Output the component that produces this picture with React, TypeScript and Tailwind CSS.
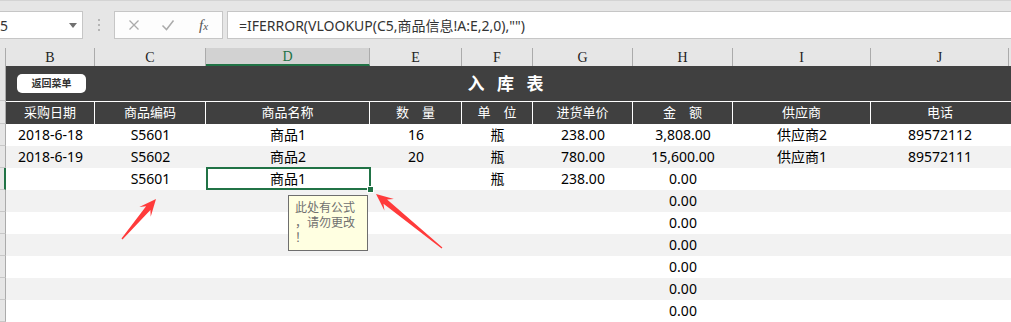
import React from 'react';

const COLS = [
  { k: 'B', w: 'w-[89px]' },
  { k: 'C', w: 'w-[111px]' },
  { k: 'D', w: 'w-[164px]' },
  { k: 'E', w: 'w-[92px]' },
  { k: 'F', w: 'w-[71px]' },
  { k: 'G', w: 'w-[100px]' },
  { k: 'H', w: 'w-[100px]' },
  { k: 'I', w: 'w-[138px]' },
  { k: 'J', w: 'w-[138px]' },
];

const HEADERS = ['采购日期', '商品编码', '商品名称', '数　量', '单　位', '进货单价', '金　额', '供应商', '电话'];

const E = ['', '', '', '', '', '', '0.00', '', ''];
const ROWS: string[][] = [
  ['2018-6-18', 'S5601', '商品1', '16', '瓶', '238.00', '3,808.00', '供应商2', '89572112'],
  ['2018-6-19', 'S5602', '商品2', '20', '瓶', '780.00', '15,600.00', '供应商1', '89572111'],
  ['', 'S5601', '商品1', '', '瓶', '238.00', '0.00', '', ''],
  E, E, E, E, E, E,
  ['', '', '', '', '', '', '', '', ''],
];

function arrow(tx: number, ty: number, hx: number, hy: number) {
  const dx = hx - tx;
  const dy = hy - ty;
  const L = Math.hypot(dx, dy);
  const ux = dx / L;
  const uy = dy / L;
  const px = -uy;
  const py = ux;
  const headLen = 17;
  const headHalf = 7.5;
  const neckBack = 12;
  const neckHalf = 2.8;
  const tailHalf = 0.6;
  const P = (along: number, side: number) => [hx - ux * along + px * side, hy - uy * along + py * side];
  const pts = [
    P(L, tailHalf),
    P(neckBack, neckHalf),
    P(headLen, headHalf),
    P(0, 0),
    P(headLen, -headHalf),
    P(neckBack, -neckHalf),
    P(L, -tailHalf),
  ];
  return pts.map((p) => p.map((n) => n.toFixed(1)).join(',')).join(' ');
}

function RowHead({ selected, h }: { selected?: boolean; h: string }) {
  return (
    <div
      className={`${h} w-[6px] shrink-0 bg-[#e6e6e6] border-b border-[#c8c8c8] ${
        selected ? 'border-r-2 border-r-[#217346]' : 'border-r border-r-[#ababab]'
      }`}
    />
  );
}

export default function App() {
  return (
    <div className="relative w-[1011px] h-[322px] overflow-hidden bg-white font-['Noto_Sans','Noto_Sans_CJK_SC',sans-serif] text-black">
      {/* Formula bar */}
      <div className="h-[48px] bg-[#e6e6e6] border-t border-[#d4d4d4] flex items-start pt-[10px]">
        <div className="w-[83px] h-[28px] shrink-0 bg-white border border-l-0 border-[#c6c6c6] flex items-center justify-between pr-[5px]">
          <span className="text-[14px] text-[#333]">5</span>
          <svg width="8" height="5" viewBox="0 0 8 5">
            <polygon points="0,0 8,0 4,5" fill="#707070" />
          </svg>
        </div>
        <div className="w-[31px] h-[28px] shrink-0 flex flex-col items-center justify-center gap-[3px]">
          <span className="w-[2px] h-[2px] bg-[#b5b5b5]" />
          <span className="w-[2px] h-[2px] bg-[#b5b5b5]" />
          <span className="w-[2px] h-[2px] bg-[#b5b5b5]" />
        </div>
        <div className="w-[109px] h-[28px] shrink-0 bg-[#fdfdfd] border border-[#c6c6c6] flex items-center pl-[12px]">
          <svg width="14" height="14" viewBox="0 0 14 14">
            <path d="M2.5 2.5 L11.5 11.5 M11.5 2.5 L2.5 11.5" stroke="#ababab" strokeWidth="1.3" />
          </svg>
          <svg width="14" height="14" viewBox="0 0 14 14" className="ml-[20px]">
            <path d="M1.5 7.5 L5.5 11.5 L12.5 2.5" stroke="#ababab" strokeWidth="1.5" fill="none" />
          </svg>
          <span className="ml-[24px] font-['Liberation_Serif',serif] italic text-[15px] leading-none text-[#555]">
            f<span className="text-[11px]">x</span>
          </span>
        </div>
        <div className="ml-[4px] flex-1 h-[28px] bg-white border border-r-0 border-[#c6c6c6] flex items-center pl-[11px] text-[14px] text-[#333]">
          =IFERROR(VLOOKUP(C5,商品信息!A:E,2,0),"")
        </div>
      </div>

      {/* Column headers */}
      <div className="h-[18px] flex bg-[#e6e6e6] font-['Liberation_Serif',serif] text-[14px]">
        <div className="w-[6px] shrink-0 border-r border-[#ababab]" />
        {COLS.map((c) => (
          <div
            key={c.k}
            className={`${c.w} shrink-0 flex items-center justify-center border-r border-[#ababab] ${
              c.k === 'D' ? 'bg-[#d2d2d2] text-[#217346] border-b-2 border-b-[#217346]' : 'text-[#222]'
            }`}
          >
            {c.k}
          </div>
        ))}
        <div className="flex-1" />
      </div>

      {/* Title row */}
      <div className="h-[35px] flex">
        <RowHead h="h-[35px]" />
        <div className="relative flex-1 bg-[#404040] flex items-center justify-center">
          <div className="absolute left-[11px] top-[8px] w-[69px] h-[19px] rounded-[5px] bg-white flex items-center justify-center text-[10px] font-bold text-[#333]">
            返回菜单
          </div>
          <span className="pr-[2px] text-[17px] font-bold text-white tracking-[4px]">入 库 表</span>
        </div>
      </div>

      {/* Header row */}
      <div className="h-[23px] flex">
        <RowHead h="h-[23px]" />
        <div className="flex-1 flex bg-[#404040] border-t border-white text-[13px] text-white">
          {COLS.map((c, i) => (
            <div
              key={c.k}
              className={`${c.w} shrink-0 flex items-center justify-center ${i < COLS.length - 1 ? 'border-r border-white' : ''}`}
            >
              {HEADERS[i]}
            </div>
          ))}
          <div className="flex-1" />
        </div>
      </div>

      {/* Data rows */}
      {ROWS.map((r, ri) => (
        <div key={ri} className="h-[22px] flex">
          <RowHead h="h-[22px]" selected={ri === 2} />
          <div className={`flex-1 flex text-[14px] ${ri % 2 === 1 ? 'bg-[#f2f2f2]' : 'bg-white'}`}>
            {COLS.map((c, ci) => (
              <div key={c.k} className={`${c.w} shrink-0 relative flex items-center justify-center pb-[1px]`}>
                {r[ci]}
                {ri === 2 && ci === 2 && (
                  <>
                    <div className="absolute -top-[1px] left-0 -right-[1px] bottom-0 border-2 border-[#217346]" />
                    <div className="absolute -right-[4px] -bottom-[3px] w-[7px] h-[7px] bg-[#217346] border border-white" />
                  </>
                )}
              </div>
            ))}
            <div className="flex-1" />
          </div>
        </div>
      ))}

      {/* Comment tooltip */}
      <div className="absolute left-[288px] top-[195px] w-[80px] h-[56px] bg-[#ffffe1] border border-[#6e6e6e] pl-[6px] pt-[4px] text-[12px] leading-[15px] text-[#707070]">
        <div>此处有公式</div>
        <div>，请勿更改</div>
        <div>！</div>
      </div>

      {/* Arrows */}
      <svg className="absolute left-0 top-0 pointer-events-none" width="1011" height="322" viewBox="0 0 1011 322">
        <polygon points={arrow(122, 239, 156, 199)} fill="#ff3b3b" />
        <polygon points={arrow(442, 248, 376, 194)} fill="#ff3b3b" />
      </svg>
    </div>
  );
}
